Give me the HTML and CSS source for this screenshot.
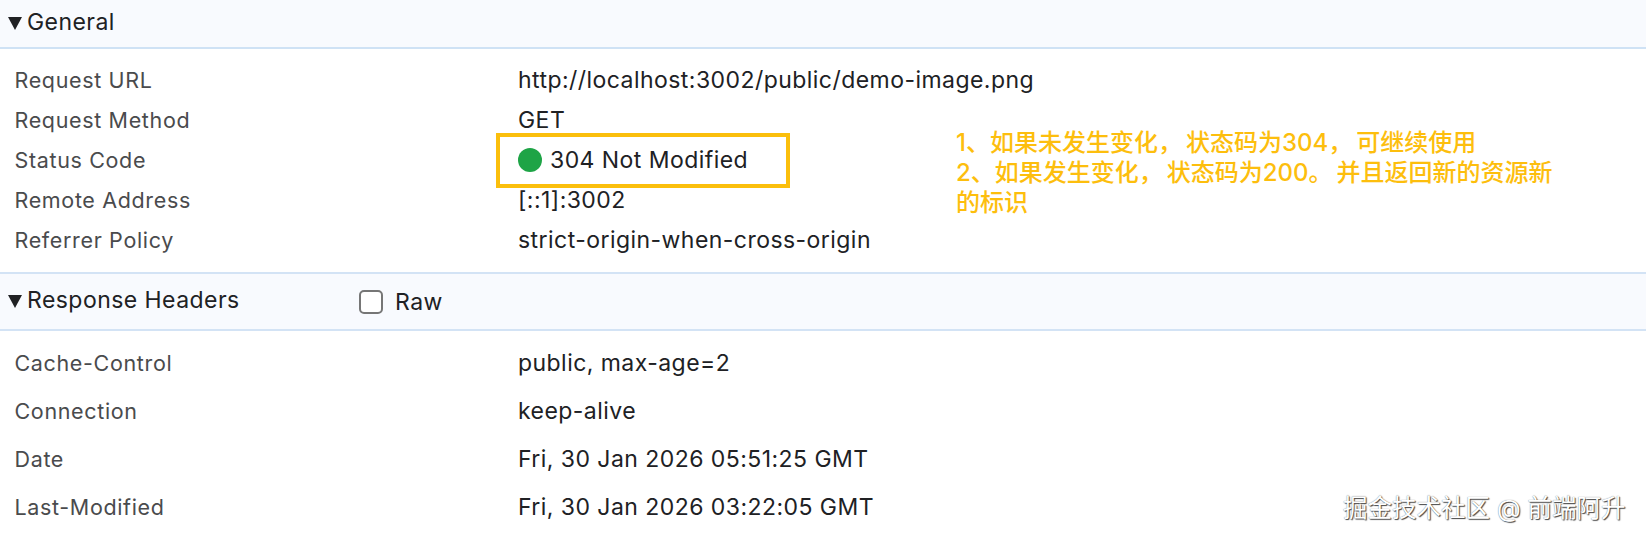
FILE: index.html
```html
<!DOCTYPE html>
<html lang="zh">
<head>
    <meta charset="UTF-8">
    <title>Headers</title>
    <link rel="stylesheet" href="styles.css">
</head>
<body>
    <div class="panel">
        <div class="section-title general-title">
            <span class="arrow"></span>
            <span class="title-text">General</span>
        </div>
        <div class="rows general-rows">
            <div class="row"><span class="label">Request URL</span><span class="value">http://localhost:3002/public/demo-image.png</span></div>
            <div class="row"><span class="label">Request Method</span><span class="value">GET</span></div>
            <div class="row"><span class="label">Status Code</span><span class="value"><span class="status-dot"></span>304 Not Modified</span></div>
            <div class="row"><span class="label">Remote Address</span><span class="value">[::1]:3002</span></div>
            <div class="row"><span class="label">Referrer Policy</span><span class="value">strict-origin-when-cross-origin</span></div>
        </div>
        <div class="section-title response-title">
            <span class="arrow"></span>
            <span class="title-text response-text">Response Headers</span>
            <span class="raw-box"></span>
            <span class="raw-label">Raw</span>
        </div>
        <div class="rows response-rows">
            <div class="row"><span class="label">Cache-Control</span><span class="value">public, max-age=2</span></div>
            <div class="row"><span class="label">Connection</span><span class="value">keep-alive</span></div>
            <div class="row"><span class="label">Date</span><span class="value">Fri, 30 Jan 2026 05:51:25 GMT</span></div>
            <div class="row"><span class="label">Last-Modified</span><span class="value">Fri, 30 Jan 2026 03:22:05 GMT</span></div>
        </div>
    </div>

    <!-- annotations drawn over the screenshot -->
    <div class="highlight-box"></div>
    <div class="note">
        <div>1、如果未发生变化<span class="punct">，</span>状态码为304<span class="punct">，</span>可继续使用</div>
        <div>2、如果发生变化<span class="punct">，</span>状态码为200<span class="punct">。</span>并且返回新的资源新</div>
        <div>的标识</div>
    </div>
    <div class="watermark">掘金技术社区 @ 前端阿升</div>
</body>
</html>
```

FILE: styles.css
```css
html, body {
    margin: 0;
    height: 538px;
    overflow: hidden;
    background-color: #fff;
}

body {
    position: relative;
    font-family: Inter, 'Noto Sans CJK SC', sans-serif;
    font-size: 23px;
    letter-spacing: 0.45px;
    color: #202124;
}

.section-title {
    display: flex;
    align-items: center;
    background-color: #f8fafe;
    padding-left: 8px;
    box-sizing: border-box;
}

.general-title {
    height: 49px;
    border-bottom: 2px solid #cfe2f5;
}

.response-title {
    height: 59px;
    border-top: 2px solid #d3e3f5;
    border-bottom: 2px solid #d3e3f5;
}

.arrow {
    width: 0;
    height: 0;
    border-left: 7px solid transparent;
    border-right: 7px solid transparent;
    border-top: 13px solid #202124;
    margin-right: 5px;
}

.title-text {
    margin-top: -3px;
}

.response-text {
    width: 332px;
    margin-top: -4px;
}

.raw-box {
    width: 24px;
    height: 24px;
    box-sizing: border-box;
    border: 2px solid #767676;
    border-radius: 5px;
    background-color: #fff;
}

.raw-label {
    margin-left: 12px;
}

.rows {
    display: grid;
    grid-template-columns: 503.5px 1fr;
    padding-left: 14.5px;
}

.row {
    display: contents;
}

.label, .value {
    display: flex;
    align-items: center;
}

.label {
    font-size: 21.5px;
    letter-spacing: 0.65px;
    color: #4a4b4d;
}

.general-rows {
    grid-auto-rows: 40px;
    padding-top: 11px;
    padding-bottom: 12px;
}

.response-rows {
    grid-auto-rows: 48px;
    padding-top: 8px;
}

.status-dot {
    width: 24px;
    height: 24px;
    border-radius: 50%;
    background-color: #1ea446;
    margin-right: 8px;
}

.highlight-box {
    position: absolute;
    left: 496px;
    top: 133px;
    width: 294px;
    height: 55px;
    box-sizing: border-box;
    border: 4px solid #fbbf0c;
}

.note {
    position: absolute;
    left: 956px;
    top: 128px;
    font-size: 24px;
    font-weight: 500;
    line-height: 30px;
    letter-spacing: 0;
    color: #fdbe0d;
    white-space: nowrap;
}

.punct {
    margin-right: 4px;
}

.watermark {
    position: absolute;
    left: 1343px;
    top: 492px;
    font-size: 24.5px;
    line-height: 32px;
    letter-spacing: 0;
    color: #fff;
    white-space: nowrap;
    text-shadow: 1px 1px 1px #444, 0 0 1px #666;
}
```
